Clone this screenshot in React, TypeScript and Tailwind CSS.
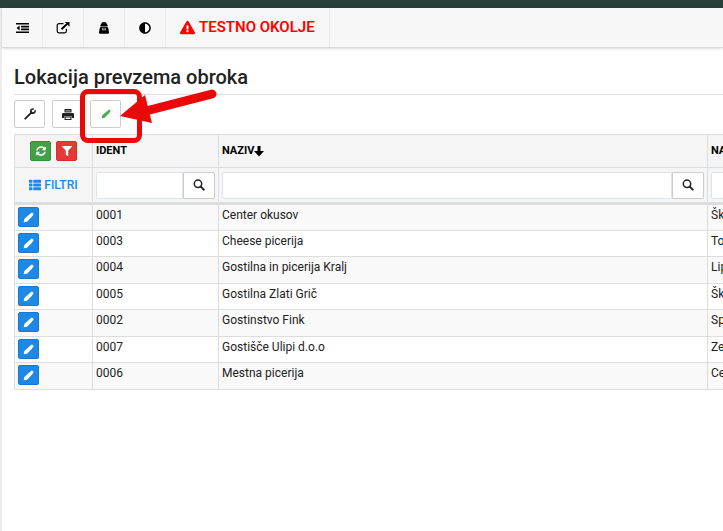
import type { ReactNode } from "react";
import { FaAdjust, FaExclamationTriangle, FaFilter, FaSyncAlt, FaThList } from "react-icons/fa";

const rows = [
  { ident: "0001", naziv: "Center okusov", naslov: "Šk" },
  { ident: "0003", naziv: "Cheese picerija", naslov: "To" },
  { ident: "0004", naziv: "Gostilna in picerija Kralj", naslov: "Lip" },
  { ident: "0005", naziv: "Gostilna Zlati Grič", naslov: "Šk" },
  { ident: "0002", naziv: "Gostinstvo Fink", naslov: "Sp" },
  { ident: "0007", naziv: "Gostišče Ulipi d.o.o", naslov: "Ze" },
  { ident: "0006", naziv: "Mestna picerija", naslov: "Ce" },
];

function PencilIcon({ size = 12 }: { size?: number }) {
  return (
    <svg width={size} height={size} viewBox="0 0 12 12" fill="currentColor">
      <path d="M.8 11.200l.6-3.600L7.500 2.300l2.500 2.500L4.400 10.600z" />
      <path d="M7.300 2.500l1.500-1.400a1.200 1.200 0 0 1 1.700 0l.6.6a1.200 1.200 0 0 1 0 1.700L9.800 5z" />
    </svg>
  );
}

function WrenchIcon() {
  return (
    <svg width="12" height="12" viewBox="0 0 12 12" fill="none" stroke="currentColor" strokeLinecap="round">
      <path d="M1.300 10.700L6.800 5.200" strokeWidth="1.900" />
      <path d="M9.300 .9Q6.600 1 6.700 3.500L6.900 5.100 8.500 5.300Q11 5.300 11.200 2.800" strokeWidth="1.500" strokeLinejoin="round" />
      <path d="M6.900 3.600L8.400 5.100" strokeWidth="2" />
    </svg>
  );
}

function OutdentIcon() {
  return (
    <svg width="13" height="10" viewBox="0 0 13 10" fill="currentColor">
      <path d="M0 0h13v1.600H0zM5 2.800h8v1.600H5zM5 5.600h8v1.600H5zM0 8.400h13V10H0zM3.600 2.600v4.800L.6 5z" />
    </svg>
  );
}

function ExternalLinkIcon() {
  return (
    <svg width="14" height="12" viewBox="0 0 14 12" fill="none" stroke="currentColor">
      <path d="M7.500 1.700H3A1.800 1.800 0 0 0 1.200 3.500V9A1.800 1.800 0 0 0 3 10.800h5.600A1.800 1.800 0 0 0 10.400 9V6.800" strokeWidth="1.200" />
      <path d="M5.500 7.200L11 2" strokeWidth="2" />
      <path d="M8.800 0H13.500V4.700z" fill="currentColor" stroke="none" />
    </svg>
  );
}

function BackpackIcon() {
  return (
    <svg width="10" height="12" viewBox="0 0 10 12" fill="currentColor">
      <path d="M3 0.300h4L8 2.500 8.600 3v1H1.400V3L2 2.500z" />
      <path d="M1.600 4.400h6.800Q10 7 10 10.500q0 1.300-1.200 1.300H1.200Q0 11.800 0 10.500 0 7 1.600 4.400z" />
      <path d="M3 5.800h4v2.600H3z" fill="#999" />
      <path d="M4 6.300l1 1 1-1" fill="none" stroke="#111" />
    </svg>
  );
}

function PrintIcon() {
  return (
    <svg width="12" height="11" viewBox="0 0 12 11" fill="currentColor">
      <path d="M2.500 0h7v3.400h-7z" />
      <path d="M3.500 1h5v1.800h-5z" fill="#777" />
      <path d="M1 4h10q1 0 1 1v4H9.800V7.200H2.200V9H0V5q0-1 1-1z" />
      <path fillRule="evenodd" d="M2.500 7.600h7V11h-7zM3.600 8.600v1.400h4.800V8.600z" />
    </svg>
  );
}

function SearchIcon() {
  return (
    <svg width="12" height="12" viewBox="0 0 12 12" fill="none" stroke="currentColor">
      <circle cx="5" cy="4.800" r="3.700" strokeWidth="1.500" />
      <path d="M7.800 7.600L10.800 10.600" strokeWidth="2" strokeLinecap="round" />
    </svg>
  );
}

function NavItem({ label, children }: { label: string; children: ReactNode }) {
  return (
    <button type="button" aria-label={label} className="flex w-[41px] items-center justify-center border-r border-[#ececec]">
      {children}
    </button>
  );
}

function ToolButton({ label, children }: { label: string; children: ReactNode }) {
  return (
    <button type="button" aria-label={label} className="flex h-7 w-[31px] items-center justify-center rounded-xs border border-[#ccc] bg-white">
      {children}
    </button>
  );
}

function FilterBox({ label }: { label: string }) {
  return (
    <div className="flex h-[27px]">
      <input type="text" aria-label={label} className="min-w-0 flex-1 rounded-l-xs border border-[#dde5ec] bg-white px-1 outline-none" />
      <button type="button" aria-label={`Išči ${label}`} className="flex w-8 shrink-0 items-center justify-center rounded-r-xs border border-[#ccc] bg-white">
        <SearchIcon />
      </button>
    </div>
  );
}

// red frame and arrow that point at the edit button
function Callout() {
  return (
    <div className="pointer-events-none absolute -left-[10px] -top-[11px] z-10">
      <div className="h-[54px] w-[62px] rounded-lg border-[5px] border-[#ea0808]" />
      <svg width="138" height="38" viewBox="0 0 138 38" className="absolute left-0 top-0">
        <path d="M62 23L132 5" stroke="#ea0808" strokeWidth="9" strokeLinecap="round" />
        <path d="M40 27L65 6L72 34z" fill="#ea0808" />
      </svg>
    </div>
  );
}

export default function App() {
  return (
    <div className="flex min-h-screen flex-col overflow-hidden bg-white font-['Roboto',sans-serif] text-xs text-[#222]">
      <div className="h-2 bg-[#27403b]" />
      <div className="flex-1 border-l-2 border-[#ececec]">
        <header className="flex h-10 border-b border-[#d8d8d8] bg-[#f7f7f7] text-black shadow-sm">
          <NavItem label="Meni"><OutdentIcon /></NavItem>
          <NavItem label="Odpri"><ExternalLinkIcon /></NavItem>
          <NavItem label="Nahrbtnik"><BackpackIcon /></NavItem>
          <NavItem label="Kontrast"><FaAdjust size={12} /></NavItem>
          <div className="flex items-center gap-1 border-r border-[#ececec] px-[14px] text-[15px] font-semibold text-[#f00]">
            <FaExclamationTriangle size={15} />
            <span>TESTNO OKOLJE</span>
          </div>
        </header>

        <main className="pl-3">
          <h1 className="mb-[5px] border-b border-[#ddd] pb-1 pt-4 text-[20px] font-medium leading-[26px]">Lokacija prevzema obroka</h1>
          <div className="flex gap-[7px]">
            <ToolButton label="Nastavitve"><WrenchIcon /></ToolButton>
            <ToolButton label="Natisni"><PrintIcon /></ToolButton>
            <div className="relative text-[#4caf50]">
              <ToolButton label="Uredi"><PencilIcon size={10} /></ToolButton>
              <Callout />
            </div>
          </div>

          {/* wider than the view, the last column runs off to the right */}
          <table className="mt-[6px] w-[calc(100%+65px)] table-fixed border-collapse border border-[#ddd]">
            <colgroup>
              <col className="w-[78px]" />
              <col className="w-[126px]" />
              <col />
              <col className="w-20" />
            </colgroup>
            <thead className="bg-[#f5f5f5] text-left">
              <tr className="h-[33px] text-[11px] text-black">
                <th className="border border-[#ddd]">
                  <div className="flex justify-center gap-[5px] text-white">
                    <button type="button" aria-label="Osveži" className="flex h-5 w-[21px] items-center justify-center rounded-xs border border-[#388e3c] bg-[#43a047]">
                      <FaSyncAlt size={10} />
                    </button>
                    <button type="button" aria-label="Počisti filter" className="flex h-5 w-[21px] items-center justify-center rounded-xs border border-[#d32f2f] bg-[#e53935]">
                      <FaFilter size={10} />
                    </button>
                  </div>
                </th>
                <th className="border border-[#ddd] px-[3px]">IDENT</th>
                <th className="border border-[#ddd] px-[3px]">
                  <span className="flex items-center">
                    NAZIV
                    <svg width="10" height="11" viewBox="0 0 10 11" fill="currentColor">
                      <path d="M3.500 0h3v5H10L5 10.500 0 5h3.500z" />
                    </svg>
                  </span>
                </th>
                <th className="border border-[#ddd] px-[3px]">NA</th>
              </tr>
              <tr className="h-9 border-b-[3px] border-[#ddd]">
                <td className="border-x border-[#ddd]">
                  <button type="button" className="mx-auto flex items-center gap-[3px] font-medium text-[#1e88e5]">
                    <FaThList size={12} />
                    FILTRI
                  </button>
                </td>
                <td className="border-x border-[#ddd] px-[3px]"><FilterBox label="Ident" /></td>
                <td className="border-x border-[#ddd] px-[3px]"><FilterBox label="Naziv" /></td>
                <td className="border-x border-[#ddd] px-[3px]">
                  <input type="text" aria-label="Naslov" className="block h-[27px] w-full rounded-xs border border-[#dde5ec] bg-white" />
                </td>
              </tr>
            </thead>
            <tbody>
              {rows.map((row) => (
                <tr key={row.ident} className="align-top leading-4 odd:h-[27px] odd:bg-[#f9f9f9] even:h-[26px]">
                  <td className="border border-[#ddd] px-[3px] pt-[2px]">
                    <button type="button" aria-label={`Uredi ${row.ident}`} className="flex h-5 w-[21px] items-center justify-center rounded-xs border border-[#1976d2] bg-[#1e88e5] text-white">
                      <PencilIcon size={11} />
                    </button>
                  </td>
                  <td className="border border-[#ddd] px-[3px] pt-[2px]">{row.ident}</td>
                  <td className="border border-[#ddd] px-[3px] pt-[2px]">{row.naziv}</td>
                  <td className="border border-[#ddd] px-[3px] pt-[2px]">{row.naslov}</td>
                </tr>
              ))}
            </tbody>
          </table>
        </main>
      </div>
    </div>
  );
}
